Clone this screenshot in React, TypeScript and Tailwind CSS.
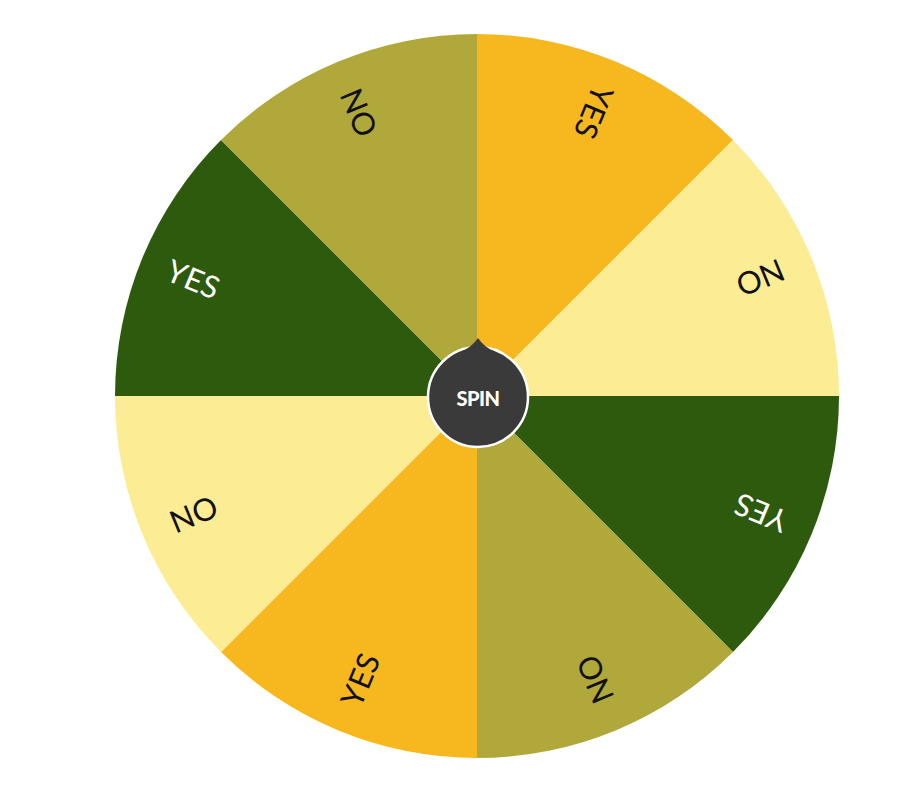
const segments = [
  { label: "YES", color: "#F7B81F" },
  { label: "NO", color: "#FCEC93" },
  { label: "YES", color: "#2D5A0C" },
  { label: "NO", color: "#B0A83A" },
  { label: "YES", color: "#F7B81F" },
  { label: "NO", color: "#FCEC93" },
  { label: "YES", color: "#2D5A0C" },
  { label: "NO", color: "#B0A83A" },
];

const R = 362;

function point(angle: number, r: number) {
  const rad = (angle * Math.PI) / 180;
  return [R + r * Math.sin(rad), R - r * Math.cos(rad)];
}

function Wheel() {
  return (
    <svg width={724} height={724} viewBox="0 0 724 724">
      {segments.map((s, i) => {
        const a0 = i * 45;
        const a1 = a0 + 45;
        const [x0, y0] = point(a0, R);
        const [x1, y1] = point(a1, R);
        return (
          <path
            key={"s" + i}
            d={`M ${R} ${R} L ${x0} ${y0} A ${R} ${R} 0 0 1 ${x1} ${y1} Z`}
            fill={s.color}
          />
        );
      })}
      {segments.map((s, i) => {
        const mid = i * 45 + 22.5;
        const [tx, ty] = point(mid, 307);
        const dark = s.color === "#2D5A0C";
        return (
          <text
            key={"t" + i}
            x={tx}
            y={ty}
            textAnchor="middle"
            dominantBaseline="central"
            transform={`rotate(${mid + 90} ${tx} ${ty})`}
            fill={dark ? "#ffffff" : "#111111"}
            style={{ fontFamily: "Lato, 'Open Sans', sans-serif", fontSize: 31 }}
          >
            {s.label}
          </text>
        );
      })}
      <g transform={`translate(${R + 1} ${R + 1})`}>
        <circle r={50} fill="#3b3a3a" stroke="#ffffff" strokeWidth={2.5} />
        <path d="M -16 -46 Q -6 -50 0 -59 Q 6 -50 16 -46 Z" fill="#3b3a3a" />
      </g>
    </svg>
  );
}

export default function App() {
  return (
    <main className="w-[907px] h-[800px] bg-white relative">
      <div className="pt-[34px] pl-[115px]">
        <Wheel />
      </div>
      <button className="absolute left-[428px] top-[348px] w-[100px] h-[100px] rounded-full flex items-center justify-center text-white font-black text-[20px] tracking-tight font-['Lato',sans-serif]">
        SPIN
      </button>
    </main>
  );
}
